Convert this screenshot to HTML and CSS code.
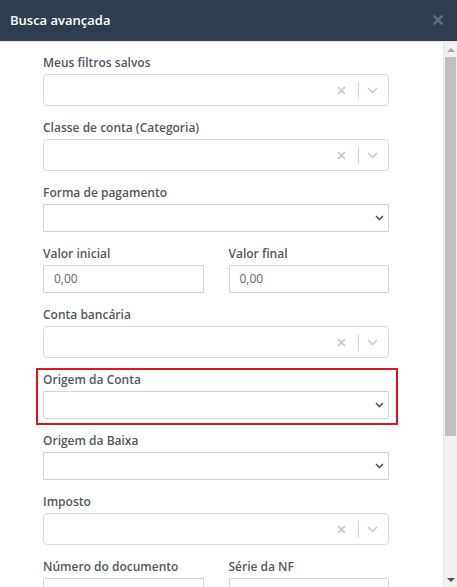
FILE: index.html
```html
<!DOCTYPE html>
<html lang="pt-BR">
<head>
<meta charset="utf-8">
<title>Busca avançada</title>
<link rel="stylesheet" href="styles.css">
</head>
<body>
<div class="modal">
  <header class="modal-header">
    <h4 class="modal-title">Busca avançada</h4>
    <button class="close" type="button" aria-label="Fechar">
      <svg width="10" height="10" viewBox="0 0 10 10"><path d="M1.5 1.5 L8.5 8.5 M8.5 1.5 L1.5 8.5" stroke="currentColor" stroke-width="2.6" stroke-linecap="square"/></svg>
    </button>
  </header>
  <div class="modal-main">
    <div class="modal-body">
      <form class="form">
        <div class="form-group">
          <label>Meus filtros salvos</label>
          <div class="rselect">
            <div class="rselect-value"></div>
            <div class="indicators">
              <span class="ind clear"><svg width="9" height="9" viewBox="0 0 9 9"><path d="M1 1 L8 8 M8 1 L1 8" stroke="currentColor" stroke-width="1.6"/></svg></span>
              <span class="sep"></span>
              <span class="ind drop"><svg width="11" height="7" viewBox="0 0 11 7"><path d="M1 1 L5.5 5.5 L10 1" fill="none" stroke="currentColor" stroke-width="1.4"/></svg></span>
            </div>
          </div>
        </div>

        <div class="form-group">
          <label>Classe de conta (Categoria)</label>
          <div class="rselect">
            <div class="rselect-value"></div>
            <div class="indicators">
              <span class="ind clear"><svg width="9" height="9" viewBox="0 0 9 9"><path d="M1 1 L8 8 M8 1 L1 8" stroke="currentColor" stroke-width="1.6"/></svg></span>
              <span class="sep"></span>
              <span class="ind drop"><svg width="11" height="7" viewBox="0 0 11 7"><path d="M1 1 L5.5 5.5 L10 1" fill="none" stroke="currentColor" stroke-width="1.4"/></svg></span>
            </div>
          </div>
        </div>

        <div class="form-group">
          <label>Forma de pagamento</label>
          <div class="nselect"><span class="chev"><svg width="9" height="6" viewBox="0 0 9 6"><path d="M1 1 L4.5 4.5 L8 1" fill="none" stroke="currentColor" stroke-width="1.6"/></svg></span></div>
        </div>

        <div class="row">
          <div class="form-group">
            <label>Valor inicial</label>
            <div class="tinput">0,00</div>
          </div>
          <div class="form-group">
            <label>Valor final</label>
            <div class="tinput">0,00</div>
          </div>
        </div>

        <div class="form-group">
          <label>Conta bancária</label>
          <div class="rselect">
            <div class="rselect-value"></div>
            <div class="indicators">
              <span class="ind clear"><svg width="9" height="9" viewBox="0 0 9 9"><path d="M1 1 L8 8 M8 1 L1 8" stroke="currentColor" stroke-width="1.6"/></svg></span>
              <span class="sep"></span>
              <span class="ind drop"><svg width="11" height="7" viewBox="0 0 11 7"><path d="M1 1 L5.5 5.5 L10 1" fill="none" stroke="currentColor" stroke-width="1.4"/></svg></span>
            </div>
          </div>
        </div>

        <div class="form-group highlight">
          <label>Origem da Conta</label>
          <div class="nselect"><span class="chev"><svg width="9" height="6" viewBox="0 0 9 6"><path d="M1 1 L4.5 4.5 L8 1" fill="none" stroke="currentColor" stroke-width="1.6"/></svg></span></div>
        </div>

        <div class="form-group">
          <label>Origem da Baixa</label>
          <div class="nselect"><span class="chev"><svg width="9" height="6" viewBox="0 0 9 6"><path d="M1 1 L4.5 4.5 L8 1" fill="none" stroke="currentColor" stroke-width="1.6"/></svg></span></div>
        </div>

        <div class="form-group">
          <label>Imposto</label>
          <div class="rselect">
            <div class="rselect-value"></div>
            <div class="indicators">
              <span class="ind clear"><svg width="9" height="9" viewBox="0 0 9 9"><path d="M1 1 L8 8 M8 1 L1 8" stroke="currentColor" stroke-width="1.6"/></svg></span>
              <span class="sep"></span>
              <span class="ind drop"><svg width="11" height="7" viewBox="0 0 11 7"><path d="M1 1 L5.5 5.5 L10 1" fill="none" stroke="currentColor" stroke-width="1.4"/></svg></span>
            </div>
          </div>
        </div>

        <div class="row">
          <div class="form-group">
            <label>Número do documento</label>
            <div class="tinput"></div>
          </div>
          <div class="form-group">
            <label>Série da NF</label>
            <div class="tinput"></div>
          </div>
        </div>
      </form>
    </div>
    <div class="scrollbar" aria-hidden="true">
      <div class="sb-btn sb-up"><span class="tri-up"></span></div>
      <div class="sb-track"><div class="sb-thumb"></div></div>
      <div class="sb-btn sb-down"><span class="tri-down"></span></div>
    </div>
  </div>
</div>
</body>
</html>
```

FILE: styles.css
```css
* { box-sizing: border-box; }

html, body {
  margin: 0;
  padding: 0;
  height: 100%;
  overflow: hidden;
  background: #ffffff;
  font-family: "Open Sans", "Noto Sans", "Liberation Sans", sans-serif;
}

.modal {
  display: flex;
  flex-direction: column;
  height: 100vh;
}

.modal-header {
  flex: 0 0 auto;
  height: 42px;
  background: #2e3e4f;
  border-bottom: 1px solid #dfe3e6;
  display: flex;
  align-items: center;
  justify-content: space-between;
  padding: 0 10px 0 10px;
}

.modal-title {
  margin: 0;
  color: #ffffff;
  font-size: 13px;
  font-weight: 600;
  line-height: 18px;
  padding-bottom: 1px;
}

.close {
  border: 0;
  background: none;
  padding: 0;
  margin: 0 4px 2px 0;
  color: #5f6e7d;
  display: flex;
  cursor: pointer;
}

.modal-main {
  flex: 1 1 auto;
  min-height: 0;
  display: flex;
}

.modal-body {
  flex: 1 1 auto;
  min-width: 0;
  overflow: hidden;
  padding: 12px 54px 20px 43px;
}

.form {
  display: flex;
  flex-direction: column;
}

.form-group {
  margin-bottom: 13px;
}

.form-group label {
  display: block;
  font-size: 12px;
  line-height: 17px;
  font-weight: 600;
  color: #53585d;
  margin-bottom: 3px;
}

.row {
  display: grid;
  grid-template-columns: 1fr 1fr;
  column-gap: 25px;
}

.rselect {
  height: 32px;
  border: 1px solid #d9d9d9;
  border-radius: 4px;
  background: #fff;
  display: flex;
  align-items: center;
}

.rselect-value {
  flex: 1 1 auto;
}

.indicators {
  display: flex;
  align-items: center;
  height: 100%;
}

.ind {
  display: flex;
  align-items: center;
  color: #c4c4c4;
}

.clear {
  padding: 0 12px 0 8px;
}

.sep {
  width: 1px;
  height: 17px;
  background: #d6d6d6;
}

.drop {
  padding: 0 10px 0 8px;
}

.nselect {
  height: 28px;
  border: 1px solid #d4d4d4;
  border-radius: 1px;
  background: #fff;
  display: flex;
  align-items: center;
  justify-content: flex-end;
  padding-right: 4px;
}

.chev {
  display: flex;
  color: #555;
}

.tinput {
  height: 28px;
  border: 1px solid #d4d4d4;
  border-radius: 1px;
  background: #fff;
  padding: 0 10px;
  font-size: 12px;
  line-height: 26px;
  color: #666;
}

.highlight {
  position: relative;
}

.highlight::after {
  content: "";
  position: absolute;
  left: -7px;
  right: -9px;
  top: -3px;
  bottom: -6px;
  border: 2px solid #e3141c;
  pointer-events: none;
}

/* scrollbar */
.scrollbar {
  flex: 0 0 14px;
  width: 14px;
  background: #f1f1f1;
  border-left: 1px solid #e8e8e8;
  display: flex;
  flex-direction: column;
}

.sb-btn {
  flex: 0 0 15px;
  display: flex;
  align-items: center;
  justify-content: center;
}

.sb-track {
  flex: 1 1 auto;
  display: flex;
  flex-direction: column;
}

.sb-thumb {
  height: 379px;
  margin: 0 1px 0 1px;
  background: #c1c1c1;
}

.tri-up {
  width: 0;
  height: 0;
  border-left: 4px solid transparent;
  border-right: 4px solid transparent;
  border-bottom: 4px solid #a3a3a3;
  margin-left: 1px;
}

.tri-down {
  width: 0;
  height: 0;
  border-left: 4px solid transparent;
  border-right: 4px solid transparent;
  border-top: 4px solid #505050;
  margin-left: 1px;
}
```
